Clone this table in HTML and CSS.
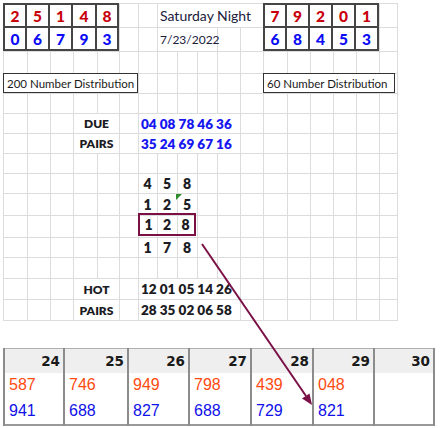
FILE: index.html
```html
<!DOCTYPE html>
<html>
<head>
<meta charset="utf-8">
<link rel="stylesheet" href="styles.css">
</head>
<body>
<div class="page">
  <div class="sheet">
    <div class="draw draw-left">
      <span class="red">2</span><span class="red">5</span><span class="red">1</span><span class="red">4</span><span class="red">8</span>
      <span class="blue">0</span><span class="blue">6</span><span class="blue">7</span><span class="blue">9</span><span class="blue">3</span>
    </div>
    <div class="txt title">Saturday Night</div>
    <div class="txt date">7/23/2022</div>
    <div class="draw draw-right">
      <span class="red">7</span><span class="red">9</span><span class="red">2</span><span class="red">0</span><span class="red">1</span>
      <span class="blue">6</span><span class="blue">8</span><span class="blue">4</span><span class="blue">5</span><span class="blue">3</span>
    </div>

    <div class="dist dist-200">200 Number Distribution</div>
    <div class="dist dist-60">60 Number Distribution</div>

    <div class="txt lbl row-due">DUE</div>
    <div class="txt nums blue-num row-due">04 08 78 46 36</div>
    <div class="txt lbl row-pairs1">PAIRS</div>
    <div class="txt nums blue-num row-pairs1">35 24 69 67 16</div>

    <div class="triad row-t1"><span>4</span><span>5</span><span>8</span></div>
    <div class="triad row-t2"><span>1</span><span>2</span><span class="flag">5</span></div>
    <div class="triad hl row-t3"><span>1</span><span>2</span><span>8</span></div>
    <div class="triad row-t4"><span>1</span><span>7</span><span>8</span></div>

    <div class="txt lbl row-hot">HOT</div>
    <div class="txt nums dark-num row-hot">12 01 05 14 26</div>
    <div class="txt lbl row-pairs2">PAIRS</div>
    <div class="txt nums dark-num row-pairs2">28 35 02 06 58</div>
  </div>

  <table class="cal">
    <colgroup>
      <col class="c60"><col class="c64"><col class="c61"><col class="c62"><col class="c62"><col class="c61"><col class="c60">
    </colgroup>
    <tr class="hd"><th>24</th><th>25</th><th>26</th><th>27</th><th>28</th><th>29</th><th>30</th></tr>
    <tr class="r1"><td class="o">587</td><td class="o">746</td><td class="o">949</td><td class="o">798</td><td class="o">439</td><td class="o">048</td><td></td></tr>
    <tr class="r2"><td class="b">941</td><td class="b">688</td><td class="b">827</td><td class="b">688</td><td class="b">729</td><td class="b">821</td><td></td></tr>
  </table>

  <svg class="arrow" width="441" height="428" viewBox="0 0 441 428">
    <line x1="202" y1="244" x2="306" y2="396" stroke="#7a1046" stroke-width="2"/>
    <polygon points="312,405 302,398.5 309.5,393.5" fill="#7a1046"/>
  </svg>
</div>
</body>
</html>
```

FILE: styles.css
```css
body {
  margin: 0;
  background: #fff;
  font-family: Lato, "Liberation Sans", sans-serif;
}

.page {
  position: relative;
  width: 441px;
  height: 428px;
  padding: 3px 0 0 3px;
  box-sizing: border-box;
}

.sheet {
  --g: #dcdcdc;
  display: grid;
  width: 395px;
  height: 318px;
  grid-template-columns: 24px 23px 23px 24px 22px 19px 19px 20px 20px 20px 23px 23px 24px 23px 23px 23px 23px 18px;
  grid-template-rows: 24px 24px 22px 20px 20px 20px 20px 20px 20px 22px 22px 20px 21px 21px 21px;
  background-image:
    linear-gradient(to right,
      var(--g) 0 1px, transparent 1px 24px,
      var(--g) 24px 25px, transparent 25px 47px,
      var(--g) 47px 48px, transparent 48px 70px,
      var(--g) 70px 71px, transparent 71px 94px,
      var(--g) 94px 95px, transparent 95px 116px,
      var(--g) 116px 117px, transparent 117px 135px,
      var(--g) 135px 136px, transparent 136px 154px,
      var(--g) 154px 155px, transparent 155px 174px,
      var(--g) 174px 175px, transparent 175px 194px,
      var(--g) 194px 195px, transparent 195px 214px,
      var(--g) 214px 215px, transparent 215px 237px,
      var(--g) 237px 238px, transparent 238px 260px,
      var(--g) 260px 261px, transparent 261px 284px,
      var(--g) 284px 285px, transparent 285px 307px,
      var(--g) 307px 308px, transparent 308px 330px,
      var(--g) 330px 331px, transparent 331px 353px,
      var(--g) 353px 354px, transparent 354px 376px,
      var(--g) 376px 377px, transparent 377px 394px,
      var(--g) 394px 395px),
    linear-gradient(to bottom,
      var(--g) 0 1px, transparent 1px 24px,
      var(--g) 24px 25px, transparent 25px 48px,
      var(--g) 48px 49px, transparent 49px 70px,
      var(--g) 70px 71px, transparent 71px 90px,
      var(--g) 90px 91px, transparent 91px 110px,
      var(--g) 110px 111px, transparent 111px 130px,
      var(--g) 130px 131px, transparent 131px 150px,
      var(--g) 150px 151px, transparent 151px 170px,
      var(--g) 170px 171px, transparent 171px 190px,
      var(--g) 190px 191px, transparent 191px 212px,
      var(--g) 212px 213px, transparent 213px 234px,
      var(--g) 234px 235px, transparent 235px 254px,
      var(--g) 254px 255px, transparent 255px 275px,
      var(--g) 275px 276px, transparent 276px 296px,
      var(--g) 296px 297px, transparent 297px 317px,
      var(--g) 317px 318px);
}

/* text cells that hide gridlines underneath */
.txt {
  margin: 1px 0 0 1px;
  background: #fff;
  display: flex;
  align-items: center;
  white-space: nowrap;
}

/* draw boxes */
.draw {
  grid-row: 1 / 3;
  display: grid;
  grid-template-rows: 23px 23px;
  border-left: 2px solid #454545;
  border-top: 2px solid #454545;
  box-sizing: border-box;
  background: #fff;
  font-weight: 900;
  font-size: 15.5px;
}
.draw span {
  display: flex;
  align-items: center;
  justify-content: center;
  border-right: 2px solid #454545;
  border-bottom: 2px solid #454545;
}
.draw-left {
  grid-column: 1 / 6;
  grid-template-columns: 22px 23px 23px 24px 22px;
}
.draw-right {
  grid-column: 13 / 18;
  grid-template-columns: 22px 23px 23px 23px 23px;
}
.red { color: #c8000a; }
.blue { color: #0a0af5; }

.title {
  grid-column: 8 / 13;
  grid-row: 1;
  padding-left: 2px;
  font-size: 14px;
  color: #20203c;
}
.date {
  grid-column: 8 / 11;
  grid-row: 2;
  padding-left: 2px;
  font-size: 12px;
  color: #20203c;
}

.dist {
  grid-row: 4;
  border: 1px solid #333;
  background: #fff;
  box-sizing: border-box;
  display: flex;
  align-items: center;
  padding-left: 3px;
  font-size: 11.5px;
  color: #1a1a1a;
  white-space: nowrap;
}
.dist-200 { grid-column: 1 / 7; }
.dist-60 { grid-column: 13 / 19; margin-right: 2px; }

.lbl {
  grid-column: 4 / 6;
  justify-content: center;
  font-weight: 800;
  font-size: 12px;
  color: #1c1c24;
}
.nums {
  grid-column: 7 / 12;
  padding-left: 2px;
  font-weight: 800;
  font-size: 13.5px;
}
.blue-num { color: #1616f0; }
.dark-num { color: #1c1c24; }

.row-due { grid-row: 6; }
.row-pairs1 { grid-row: 7; }
.row-t1 { grid-row: 9; }
.row-t2 { grid-row: 10; }
.row-t3 { grid-row: 11; }
.row-t4 { grid-row: 12; }
.row-hot { grid-row: 14; }
.row-pairs2 { grid-row: 15; }

.triad {
  grid-column: 7 / 10;
  display: grid;
  grid-template-columns: 19px 20px 20px;
  font-weight: 800;
  font-size: 14px;
  color: #1c1c24;
}
.triad span {
  position: relative;
  display: flex;
  align-items: center;
  justify-content: center;
}
.triad.hl {
  border: 2px solid #7a1046;
  box-sizing: border-box;
  margin: -2px 1px 1px 0;
  grid-template-columns: 17px 20px 17px;
}
.flag::before {
  content: "";
  position: absolute;
  top: 1px;
  left: -1px;
  border-top: 6px solid #2e8b2e;
  border-right: 6px solid transparent;
}

/* bottom calendar strip */
.cal {
  margin-top: 27px;
  border-collapse: collapse;
  table-layout: fixed;
  width: 432px;
  border-top: 1px solid #b0b0b0;
  border-bottom: 2px solid #999;
}
.c60 { width: 60px; }
.c61 { width: 61px; }
.c62 { width: 62px; }
.c64 { width: 64px; }
.cal th,
.cal td {
  border-left: 2px solid #8c8c8c;
  border-right: 2px solid #8c8c8c;
  padding: 0;
}
.cal th {
  height: 24px;
  background: #efefef;
  text-align: right;
  padding-right: 3px;
  font-family: "DejaVu Sans", sans-serif;
  font-weight: 700;
  font-size: 13.5px;
  color: #1a1a1a;
}
.cal td {
  padding-left: 4px;
  font-family: "Liberation Sans", Arial, sans-serif;
  font-size: 16px;
}
.cal .r1 td { height: 24px; }
.cal .r2 td { height: 27px; }
.cal .o { color: #ff4a10; }
.cal .b { color: #1010e8; }

.arrow {
  position: absolute;
  left: 0;
  top: 0;
  pointer-events: none;
}
```
